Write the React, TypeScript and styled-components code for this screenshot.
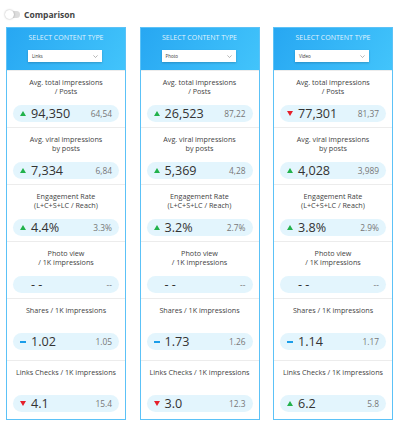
import React from 'react';
import styled, {createGlobalStyle} from 'styled-components';

type Trend = 'up' | 'down' | 'flat' | 'none';

type Metric = {
  label: string[],
  value: string,
  prev: string,
  trend: Trend,
  pb: number,
};

type Column = {
  type: string,
  metrics: [string, string, Trend][],
};

const LABELS: string[][] = [
  ['Avg. total impressions', '/ Posts'],
  ['Avg. viral impressions', 'by posts'],
  ['Engagement Rate', '(L+C+S+LC / Reach)'],
  ['Photo view', '/ 1K impressions'],
  ['Shares / 1K impressions'],
  ['Links Checks / 1K impressions'],
];

const PADDINGS = [5, 5, 5, 5, 10, 7];

const COLUMNS: Column[] = [
  {
    type: 'Links',
    metrics: [
      ['94,350', '64,54', 'up'],
      ['7,334', '6,84', 'up'],
      ['4.4%', '3.3%', 'up'],
      ['- -', '--', 'none'],
      ['1.02', '1.05', 'flat'],
      ['4.1', '15.4', 'down'],
    ],
  },
  {
    type: 'Photo',
    metrics: [
      ['26,523', '87,22', 'up'],
      ['5,369', '4,28', 'up'],
      ['3.2%', '2.7%', 'up'],
      ['- -', '--', 'none'],
      ['1.73', '1.26', 'flat'],
      ['3.0', '12.3', 'down'],
    ],
  },
  {
    type: 'Video',
    metrics: [
      ['77,301', '81,37', 'down'],
      ['4,028', '3,989', 'up'],
      ['3.8%', '2.9%', 'up'],
      ['- -', '--', 'none'],
      ['1.14', '1.17', 'flat'],
      ['6.2', '5.8', 'up'],
    ],
  },
];

const GlobalStyle = createGlobalStyle`
  body {
    margin: 0;
    background: #fff;
    font-family: "Open Sans", "Liberation Sans", sans-serif;
  }
`;

const Page = styled.div`
  padding: 8px 6px 0 6px;
`;

const TopBar = styled.div`
  display: flex;
  align-items: center;
  gap: 4px;
  height: 12px;
  margin-bottom: 7px;
`;

const Toggle = styled.div`
  position: relative;
  width: 14px;
  height: 7px;
  border-radius: 4px;
  background: #dcdcdc;
`;

const Knob = styled.div`
  position: absolute;
  left: -1px;
  top: -1px;
  width: 9px;
  height: 9px;
  border-radius: 50%;
  background: #fff;
  box-shadow: 0 0 2px rgba(0, 0, 0, 0.35);
`;

const TopTitle = styled.span`
  font-size: 8.5px;
  font-weight: 700;
  color: #444;
`;

const Row = styled.div`
  display: flex;
  gap: 13.5px;
  align-items: flex-start;
`;

const Card = styled.div`
  width: 120px;
  box-sizing: border-box;
  border: 1px solid #5cc2f7;
  background: #fff;
`;

const Header = styled.div`
  background: linear-gradient(120deg, #27a7f2 0%, #42c4fb 100%);
  padding: 5px 0 8px 0;
  display: flex;
  flex-direction: column;
  align-items: center;
`;

const HeaderTitle = styled.div`
  font-size: 7px;
  line-height: 10px;
  color: rgba(255, 255, 255, 0.88);
  margin-bottom: 7px;
`;

const Select = styled.div`
  width: 74px;
  height: 12px;
  box-sizing: border-box;
  background: #fff;
  box-shadow: 0 1px 2px rgba(0, 0, 0, 0.2);
  display: flex;
  align-items: center;
  justify-content: space-between;
  padding: 0 4px 0 4px;
  margin-left: -2px;
  font-size: 4.5px;
  color: #333;
`;

const Section = styled.div<{$pb: number}>`
  border-top: 1px solid #ececec;
  padding: 7px 6px ${p => p.$pb}px 6px;
  &:first-of-type {
    border-top: none;
  }
`;

const Label = styled.div`
  text-align: center;
  font-size: 7.2px;
  line-height: 9px;
  min-height: 18px;
  color: #3f3f3f;
  margin-bottom: 9px;
`;

const Pill = styled.div`
  height: 17px;
  border-radius: 9px;
  background: #e3f5fd;
  display: flex;
  align-items: center;
  padding: 0 7px 0 7px;
`;

const IconBox = styled.div`
  width: 7px;
  display: flex;
  align-items: center;
  justify-content: flex-start;
  margin-right: 4px;
`;

const Triangle = styled.div<{$down: boolean}>`
  width: 0;
  height: 0;
  border-left: 3px solid transparent;
  border-right: 3px solid transparent;
  ${p => p.$down
    ? 'border-top: 5px solid #e5202b;'
    : 'border-bottom: 5px solid #22b24c;'}
`;

const Dash = styled.div`
  width: 6px;
  height: 2px;
  background: #1a9de9;
`;

const Value = styled.span`
  flex: 1;
  font-size: 12.6px;
  line-height: 17px;
  color: #333;
`;

const Prev = styled.span`
  font-size: 8.4px;
  color: #777;
`;

const TrendIcon = ({trend}: {trend: Trend}) => {
  if (trend === 'up') return <Triangle $down={false}/>;
  if (trend === 'down') return <Triangle $down={true}/>;
  if (trend === 'flat') return <Dash/>;
  return null;
};

const Chevron = () => (
  <svg width="5" height="3" viewBox="0 0 5 3">
    <path d="M0.4 0.4 L2.5 2.5 L4.6 0.4" fill="none" stroke="#888" strokeWidth="0.6"/>
  </svg>
);

const MetricCard = ({column}: {column: Column}) => {
  const metrics: Metric[] = column.metrics.map(([value, prev, trend], i) => ({
    label: LABELS[i],
    value,
    prev,
    trend,
    pb: PADDINGS[i],
  }));

  return (
    <Card>
      <Header>
        <HeaderTitle>SELECT CONTENT TYPE</HeaderTitle>
        <Select>
          <span>{column.type}</span>
          <Chevron/>
        </Select>
      </Header>
      {metrics.map((m, i) => (
        <Section key={i} $pb={m.pb}>
          <Label>
            {m.label.map((line, j) => <div key={j}>{line}</div>)}
          </Label>
          <Pill>
            <IconBox><TrendIcon trend={m.trend}/></IconBox>
            <Value>{m.value}</Value>
            <Prev>{m.prev}</Prev>
          </Pill>
        </Section>
      ))}
    </Card>
  );
};

const App = () => (
  <>
    <GlobalStyle/>
    <Page>
      <TopBar>
        <Toggle><Knob/></Toggle>
        <TopTitle>Comparison</TopTitle>
      </TopBar>
      <Row>
        {COLUMNS.map(c => <MetricCard key={c.type} column={c}/>)}
      </Row>
    </Page>
  </>
);

export default App;
